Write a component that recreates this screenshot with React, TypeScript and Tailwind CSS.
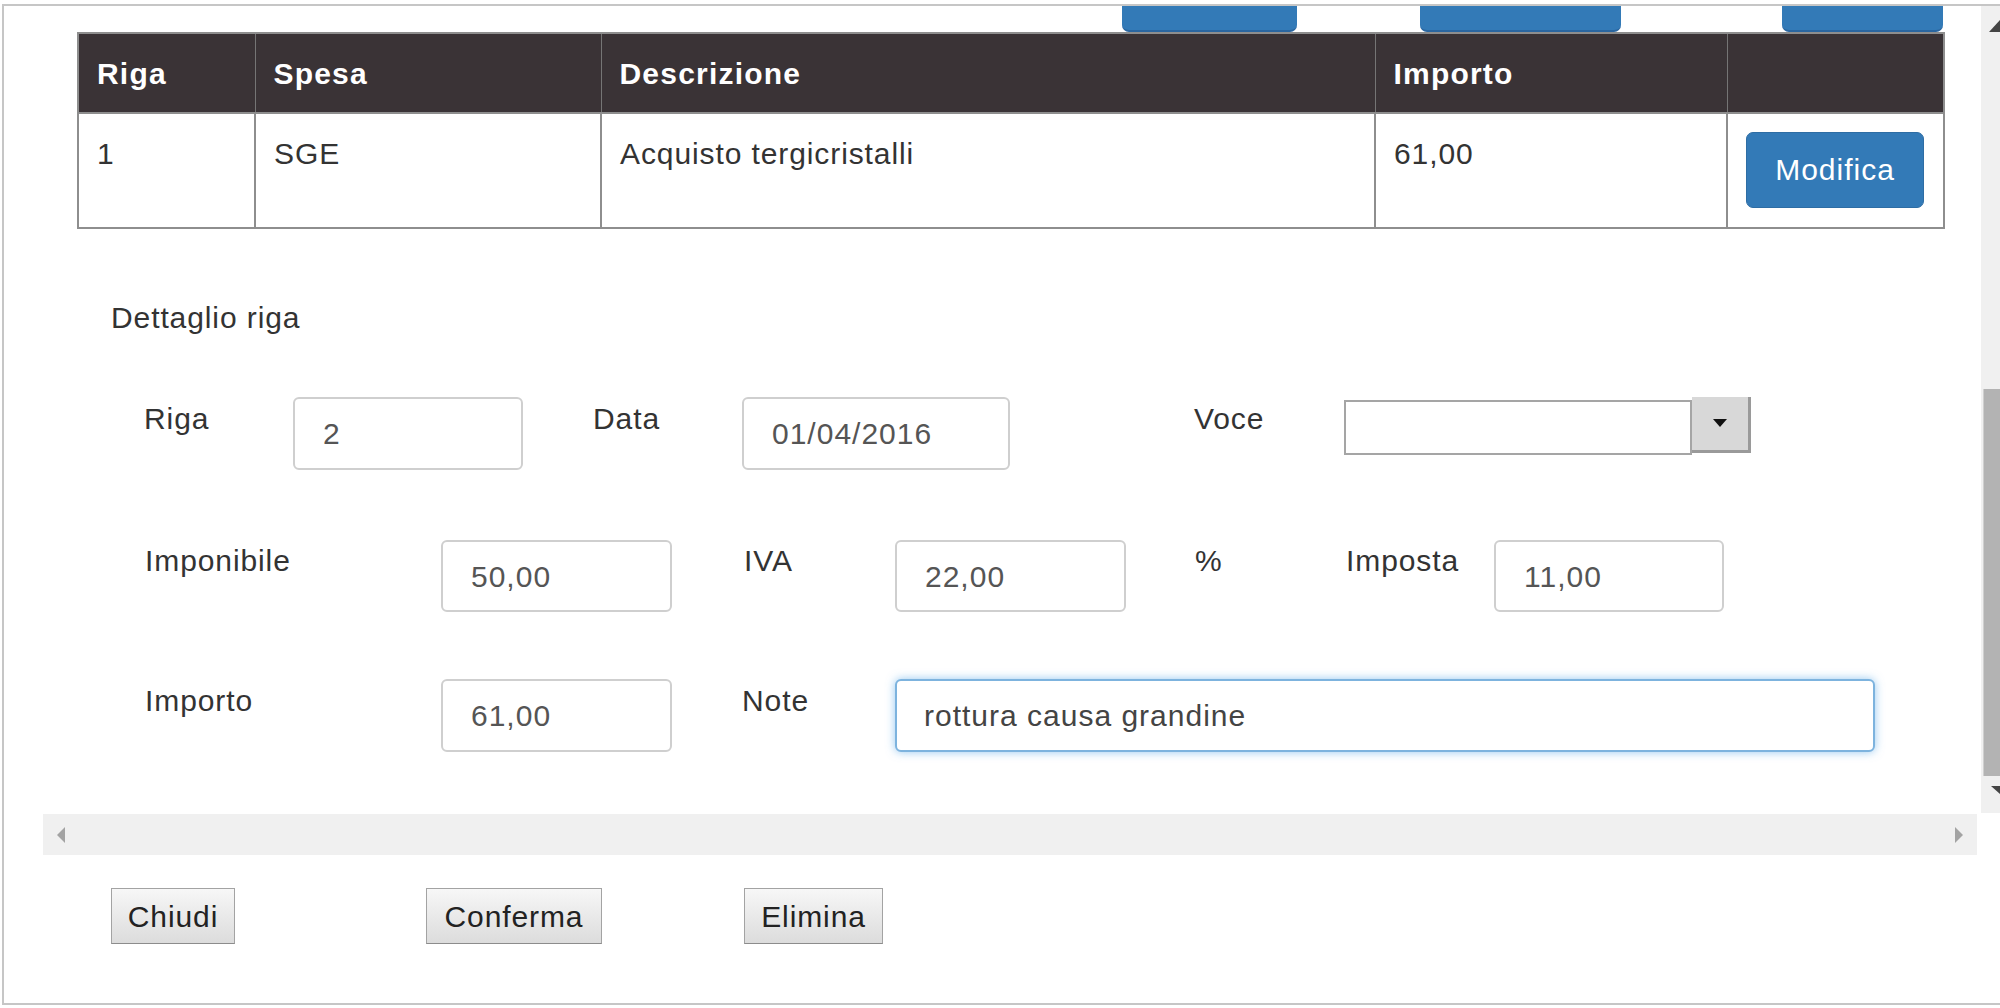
import React from "react";

function Label({ text, w, mt = 4 }: { text: string; w: number; mt?: number }) {
  return (
    <div className="shrink-0 leading-[36px] text-[#333]" style={{ width: w, marginTop: mt }}>
      {text}
    </div>
  );
}

function Field({ value, w, focus = false }: { value: string; w: number; focus?: boolean }) {
  return (
    <div
      className={
        focus
          ? "flex h-full shrink-0 items-center rounded-[6px] border-2 border-[#7db3de] bg-white pl-[27px] tracking-[1px] text-[#444] shadow-[0_0_10px_rgba(102,175,233,0.7)]"
          : "flex h-full shrink-0 items-center rounded-[6px] border-2 border-[#cfcfcf] bg-white pl-[28px] tracking-[1px] text-[#555]"
      }
      style={{ width: w }}
    >
      {value}
    </div>
  );
}

function GrayButton({ label, w, ml }: { label: string; w: number; ml: number }) {
  return (
    <button
      className="h-[56px] shrink-0 border border-[#a3a3a3] border-b-[#8c8c8c] bg-gradient-to-b from-[#f7f7f7] to-[#dcdcdc] text-[30px] tracking-[0.9px] text-[#222]"
      style={{ width: w, marginLeft: ml }}
    >
      {label}
    </button>
  );
}

export default function App() {
  return (
    <div className="h-[1008px] w-[2000px] overflow-hidden bg-white pt-[4px] font-['Liberation_Sans',Arial,sans-serif] text-[30px] tracking-[0.9px]">
      <div className="ml-[2px] flex h-[1001px] flex-col border-2 border-r-0 border-[#c6c6c6]">
        {/* scroll area */}
        <div className="flex h-[807px]">
          <div className="flex min-w-0 flex-1 flex-col overflow-hidden">
            {/* cut off buttons from above */}
            <div className="flex h-[26px] shrink-0">
              <div className="ml-[1118px] h-[26px] w-[175px] rounded-b-[7px] border-b-2 border-[#2a66a0] bg-[#337ab7]" />
              <div className="ml-[123px] h-[26px] w-[201px] rounded-b-[7px] border-b-2 border-[#2a66a0] bg-[#337ab7]" />
              <div className="ml-[161px] h-[26px] w-[161px] rounded-b-[7px] border-b-2 border-[#2a66a0] bg-[#337ab7]" />
            </div>

            <table className="ml-[73px] w-[1866px] shrink-0 table-fixed border-collapse border-2 border-[#8e8e8e]">
              <colgroup>
                <col className="w-[177px]" />
                <col className="w-[346px]" />
                <col className="w-[774px]" />
                <col className="w-[352px]" />
                <col className="w-[217px]" />
              </colgroup>
              <thead>
                <tr className="h-[80px] bg-[#3a3336] text-left font-bold tracking-[1.2px] text-white">
                  <th className="border-r border-[#757575] pl-[18px]">Riga</th>
                  <th className="border-r border-[#757575] pl-[18px]">Spesa</th>
                  <th className="border-r border-[#757575] pl-[18px]">Descrizione</th>
                  <th className="border-r border-[#757575] pl-[18px]">Importo</th>
                  <th />
                </tr>
              </thead>
              <tbody>
                <tr className="h-[115px] border-t-2 border-[#8e8e8e] align-top leading-[42px] text-[#333]">
                  <td className="border-r-2 border-[#8e8e8e] pl-[18px] pt-[19px]">1</td>
                  <td className="border-r-2 border-[#8e8e8e] pl-[18px] pt-[19px]">SGE</td>
                  <td className="border-r-2 border-[#8e8e8e] pl-[18px] pt-[19px]">Acquisto tergicristalli</td>
                  <td className="border-r-2 border-[#8e8e8e] pl-[18px] pt-[19px]">61,00</td>
                  <td className="pl-[18px] pt-[18px]">
                    <button className="h-[76px] w-[178px] rounded-[7px] border border-[#2e6da4] bg-[#337ab7] text-[30px] tracking-[1px] text-white">
                      Modifica
                    </button>
                  </td>
                </tr>
              </tbody>
            </table>

            <div className="ml-[107px] mt-[71px] leading-[36px] text-[#333]">Dettaglio riga</div>

            {/* riga 1 */}
            <div className="ml-[140px] mt-[61px] flex h-[73px] shrink-0 items-start">
              <Label text="Riga" w={149} />
              <Field value="2" w={230} />
              <div className="w-[70px] shrink-0" />
              <Label text="Data" w={149} />
              <Field value="01/04/2016" w={268} />
              <div className="w-[184px] shrink-0" />
              <Label text="Voce" w={150} />
              <div className="mt-[3px] h-[55px] w-[348px] shrink-0 border-2 border-[#a5a5a5] bg-white" />
              <div className="flex h-[56px] w-[59px] shrink-0 items-center justify-center border-r-[3px] border-b-[3px] border-[#9a9a9a] bg-[#d8d8d8]">
                <svg width="14" height="9" viewBox="0 0 14 9">
                  <path d="M0 0 H14 L7 8 Z" fill="#111" />
                </svg>
              </div>
            </div>

            {/* riga 2 */}
            <div className="ml-[141px] mt-[70px] flex h-[72px] shrink-0 items-start">
              <Label text="Imponibile" w={296} mt={3} />
              <Field value="50,00" w={231} />
              <div className="w-[72px] shrink-0" />
              <Label text="IVA" w={151} mt={3} />
              <Field value="22,00" w={231} />
              <div className="w-[69px] shrink-0" />
              <Label text="%" w={151} mt={3} />
              <Label text="Imposta" w={148} mt={3} />
              <Field value="11,00" w={230} />
            </div>

            {/* riga 3 */}
            <div className="ml-[141px] mt-[67px] flex h-[73px] shrink-0 items-start">
              <Label text="Importo" w={296} />
              <Field value="61,00" w={231} />
              <div className="w-[70px] shrink-0" />
              <Label text="Note" w={153} />
              <Field value="rottura causa grandine" w={980} focus />
            </div>
          </div>

          {/* vertical scrollbar */}
          <div className="relative w-[19px] shrink-0 bg-[#f0f0f0]">
            <svg className="absolute left-[8px] top-[14px]" width="11" height="12" viewBox="0 0 11 12">
              <path d="M11 0 V12 H0 Z" fill="#444" />
            </svg>
            <div className="absolute left-[2px] top-[383px] h-[387px] w-[17px] border-l border-[#cfcfcf] bg-[#b3b3b3]" />
            <svg className="absolute left-[10px] top-[780px]" width="9" height="8" viewBox="0 0 9 8">
              <path d="M0 0 H9 V8 Z" fill="#444" />
            </svg>
          </div>
        </div>

        {/* horizontal scrollbar */}
        <div className="ml-[39px] mt-[1px] flex h-[41px] w-[1934px] shrink-0 items-center justify-between bg-[#f0f0f0] px-[14px]">
          <svg width="8" height="16" viewBox="0 0 8 16">
            <path d="M8 0 V16 L0 8 Z" fill="#a3a3a3" />
          </svg>
          <svg width="8" height="16" viewBox="0 0 8 16">
            <path d="M0 0 V16 L8 8 Z" fill="#a3a3a3" />
          </svg>
        </div>

        {/* azioni */}
        <div className="mt-[33px] flex">
          <GrayButton label="Chiudi" w={124} ml={107} />
          <GrayButton label="Conferma" w={176} ml={191} />
          <GrayButton label="Elimina" w={139} ml={142} />
        </div>
      </div>
    </div>
  );
}
